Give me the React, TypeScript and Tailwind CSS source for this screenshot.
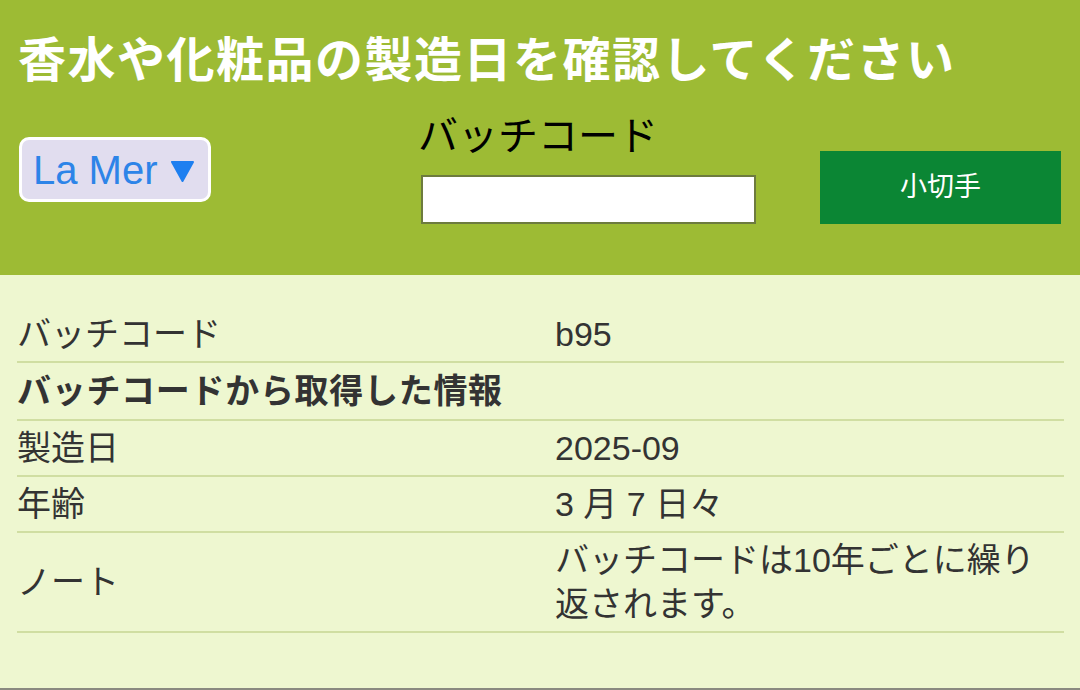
const rows = [
  { label: 'バッチコード', value: 'b95' },
  { label: '製造日', value: '2025-09' },
  { label: '年齢', value: '3 月 7 日々' },
  { label: 'ノート', value: 'バッチコードは10年ごとに繰り返されます。' }
]

const font = { fontFamily: '"Liberation Sans", "Noto Sans CJK JP", sans-serif' }

const Row = ({ label, value }: { label: string; value: string }) => (
  <div className="grid grid-cols-[538px_1fr] items-center border-b-2 border-[#d0dea2] py-[5px] text-[34px] leading-[44px] text-[#333]">
    <div>{label}</div>
    <div>{value}</div>
  </div>
)

export default function App() {
  return (
    <div className="w-[1080px] h-[690px] overflow-hidden bg-[#eef7d0]" style={font}>
      <header className="h-[275px] bg-[#9dbb34] px-[18px] pt-[33px]">
        <h1 className="text-[48px] leading-[56px] font-bold text-white tracking-[1.5px] whitespace-nowrap">
          香水や化粧品の製造日を確認してください
        </h1>
        <div className="flex items-start mt-[23px]">
          <button className="mt-[25px] ml-[1px] flex items-center gap-[12px] h-[65px] w-[192px] rounded-[10px] border-[3px] border-white bg-[#e1ddef] pl-[11px] text-[40px] text-[#2d84e8]">
            <span>La Mer</span>
            <svg width="25" height="24" viewBox="0 0 25 24" className="mt-[2px]">
              <path d="M2 3 H23 L12.5 22 Z" fill="#1e7ff0" stroke="#1e7ff0" strokeWidth="2" strokeLinejoin="round" />
            </svg>
          </button>
          <div className="ml-[210px] flex flex-col">
            <label className="text-[40px] leading-[48px] text-black -ml-[3px]">バッチコード</label>
            <input className="mt-[15px] h-[49px] w-[335px] border-2 border-[#6d7b3e] bg-white outline-none" />
          </div>
          <button className="ml-[64px] mt-[39px] h-[73px] w-[241px] bg-[#0b8634] text-[27px] text-white">
            小切手
          </button>
        </div>
      </header>
      <main className="h-[415px] border-b-2 border-[#8a8a80] px-[17px] pt-[32px] pr-[16px]">
        <Row {...rows[0]} />
        <div className="border-b-2 border-[#d0dea2] py-[6px] text-[34px] leading-[44px] font-bold text-[#333] tracking-[0.7px]">
          バッチコードから取得した情報
        </div>
        {rows.slice(1).map((r) => (
          <Row key={r.label} {...r} />
        ))}
      </main>
    </div>
  )
}
